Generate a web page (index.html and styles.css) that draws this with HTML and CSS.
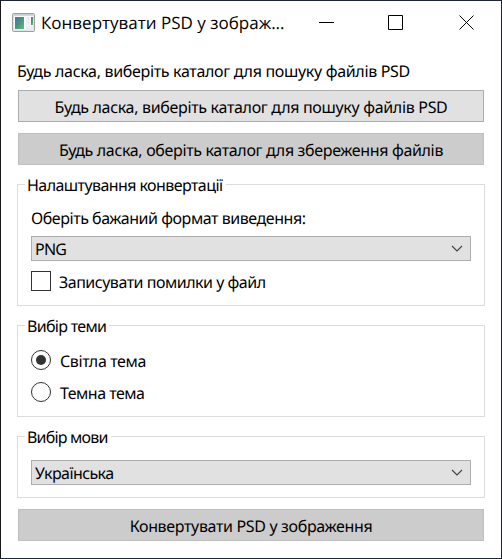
FILE: index.html
```
<!DOCTYPE html>
<html lang="uk">
<head>
<meta charset="utf-8">
<title>Конвертувати PSD у зображення</title>
<link rel="stylesheet" href="styles.css">
</head>
<body>
<div class="window">
  <header class="titlebar">
    <svg class="app-icon" width="24" height="20" viewBox="0 0 24 20">
      <defs><linearGradient id="g" x1="0" y1="0" x2="1" y2="1"><stop offset="0" stop-color="#42779f"/><stop offset=".5" stop-color="#459582"/><stop offset="1" stop-color="#6cba76"/></linearGradient></defs>
      <rect x=".5" y=".5" width="22" height="18" rx="1" fill="#e0e3e5" stroke="#9aa0a5"/>
      <path d="M1.5 1.8h20" stroke="#c3ccd4" stroke-width="1.5"/>
      <rect x="2" y="3" width="19" height="13.5" fill="#f8f9f9"/>
      <rect x="3" y="4" width="9" height="12" fill="url(#g)"/>
      <rect x="14" y="4" width="4" height="8" fill="#eceeef"/>
      <rect x="19" y="4" width="2" height="8" fill="url(#g)"/>
      <rect x="14" y="13" width="7" height="3" fill="#eceeef"/>
    </svg>
    <span class="title">Конвертувати PSD у зображ...</span>
    <svg class="controls" width="156" height="16" viewBox="0 0 156 16" fill="none" stroke="#000">
      <path d="M0 7.5h15M69.5 .5h14v14h-14z"/>
      <path d="M140.5 .5l14 14M154.5 .5l-14 14"/>
    </svg>
  </header>
  <main class="content">
    <p class="label intro"><span class="t1">Будь ласка, виберіть каталог для пошуку файлів PSD</span></p>
    <button class="button source"><span class="t1">Будь ласка, виберіть каталог для пошуку файлів PSD</span></button>
    <button class="button muted target"><span class="t2">Будь ласка, оберіть каталог для збереження файлів</span></button>
    <section class="group settings">
      <h2 class="legend"><span class="t3">Налаштування конвертації</span></h2>
      <p class="label format"><span class="t4">Оберіть бажаний формат виведення:</span></p>
      <div class="combo"><span class="t5">PNG</span><svg width="12" height="8" viewBox="0 0 12 8"><path d="M1 1l5 5 5-5" fill="none" stroke="#444" stroke-width="1.2"/></svg></div>
      <label class="option log"><i class="box"></i><span class="t6">Записувати помилки у файл</span></label>
    </section>
    <section class="group theme">
      <h2 class="legend"><span class="t7">Вибір теми</span></h2>
      <label class="option light"><i class="radio on"></i><span class="t8">Світла тема</span></label>
      <label class="option dark"><i class="radio"></i><span class="t9">Темна тема</span></label>
    </section>
    <section class="group language">
      <h2 class="legend"><span class="t10">Вибір мови</span></h2>
      <div class="combo"><span class="t11">Українська</span><svg width="12" height="8" viewBox="0 0 12 8"><path d="M1 1l5 5 5-5" fill="none" stroke="#444" stroke-width="1.2"/></svg></div>
    </section>
    <button class="button muted convert"><span class="t12">Конвертувати PSD у зображення</span></button>
  </main>
</div>
</body>
</html>
```
FILE: styles.css
```
* { box-sizing: border-box; }
body { margin: 0; background: #fff; }
.window {
  width: 502px; height: 559px; overflow: hidden;
  border: 1px solid #1c2533; border-left-color: #18161a;
  background: #fff; color: #000;
  font: 16px/20px "Noto Sans", "Open Sans", sans-serif;
  text-rendering: geometricPrecision;
}
.titlebar { display: flex; align-items: center; height: 43px; padding-left: 11px; }
.app-icon { flex: none; }
.title { margin-left: 5px; font: 17px/24px "Open Sans", "Noto Sans", sans-serif; white-space: nowrap; }
.controls { margin-left: auto; margin-right: 26px; flex: none; }
.content { display: flex; flex-direction: column; padding: 0 16px; }
p, h2 { margin: 0; font: inherit; }
span { white-space: nowrap; }
.label { height: 20px; }
.intro { margin-top: 17px; }
.button {
  display: flex; align-items: center; justify-content: center;
  height: 32px; margin: 0 1px; padding: 2px 0 0;
  border: 1px solid #adadad; border-radius: 0; background: #e1e1e1;
  color: #000; font: inherit;
  text-rendering: inherit;
}
.muted { background: #ccc; border-color: #bfbfbf; }
.source { margin-top: 9px; }
.target { margin-top: 11px; }
.convert { margin-top: 11px; }
.group { border: 1px solid #dcdcdc; padding: 0 13px; }
.settings { height: 122px; margin-top: 19px; }
.theme { height: 92px; margin-top: 19px; }
.language { height: 62px; margin-top: 19px; }
.legend { width: max-content; height: 20px; margin: -10px 0 0 -6px; padding: 0 3px 0 2px; background: #fff; }
.format { margin-top: 13px; }
.combo {
  display: flex; align-items: center; justify-content: space-between;
  height: 25px; padding: 1px 7px 0 3px;
  border: 1px solid #adadad; background: #e1e1e1;
}
.settings .combo { margin-top: 8px; }
.language .combo { margin-top: 13px; }
.option { display: flex; align-items: center; height: 20px; }
.option span { margin-left: 8px; padding-top: 2px; }
.log { margin-top: 10px; }
.light { margin-top: 14px; }
.dark { margin-top: 12px; }
.theme .option span { margin-left: 9px; }
.box { width: 20px; height: 20px; border: 1px solid #333; }
.radio { width: 20px; height: 20px; border: 1px solid #333; border-radius: 50%; display: grid; place-items: center; }
.on::after { content: ""; width: 10px; height: 10px; border-radius: 50%; background: #333; }
.t1 { letter-spacing: -.32px; }
.t2 { letter-spacing: -.34px; }
.t3 { letter-spacing: -.57px; }
.t4 { letter-spacing: -.45px; }
.t5 { letter-spacing: -.8px; }
.t6 { letter-spacing: -.49px; }
.t7 { letter-spacing: -.7px; }
.t8 { letter-spacing: -.37px; }
.t9 { letter-spacing: -.5px; }
.t10 { letter-spacing: -.8px; }
.t11 { letter-spacing: -.6px; }
.t12 { letter-spacing: -.34px; }
```
